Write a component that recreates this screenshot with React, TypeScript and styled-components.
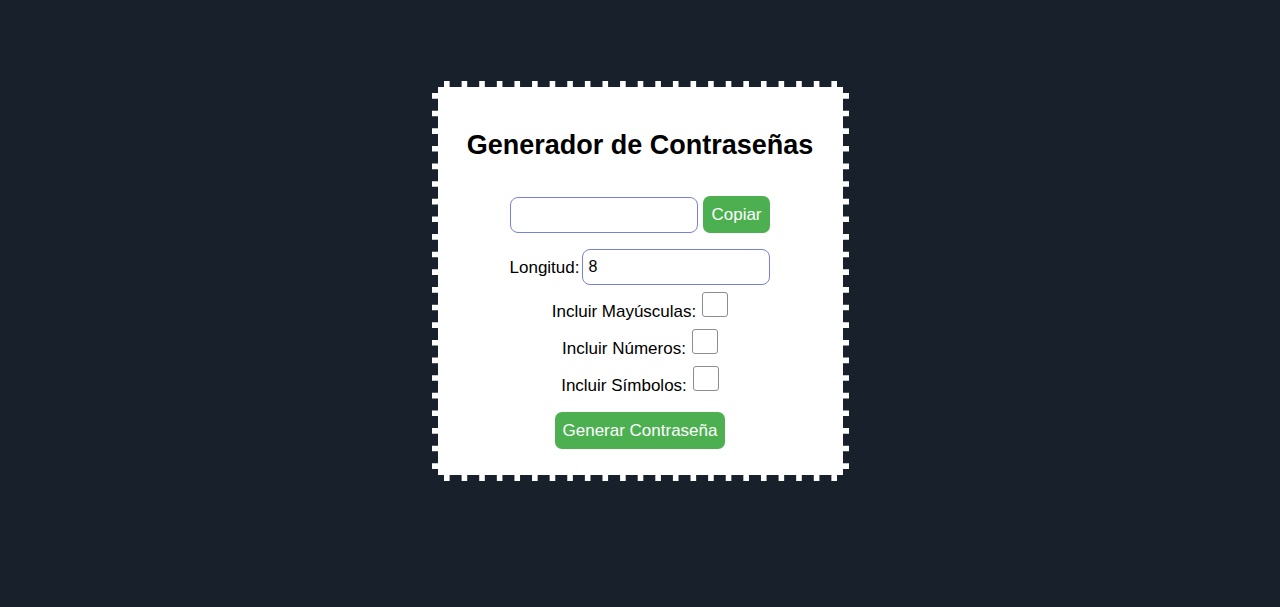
import React from "react";
import styled, { createGlobalStyle } from "styled-components";

const Global = createGlobalStyle`
  html, body { margin: 0; padding: 0; background: #17202b; }
  body { font-family: "Liberation Sans", Arial, sans-serif; }
  * { box-sizing: border-box; }
`;

const Page = styled.div`
  min-height: 607px;
  display: flex;
  justify-content: center;
  align-items: flex-start;
  padding-top: 81px;
`;

const Card = styled.div`
  width: 417px;
  height: 400px;
  background: #fff;
  border: 6px dashed #17202b;
  border-radius: 4px;
  padding-top: 43px;
  display: flex;
  flex-direction: column;
  align-items: center;
`;

const Title = styled.h1`
  margin: 0;
  font-size: 27px;
  font-weight: 700;
  color: #000;
  line-height: 31px;
`;

const Row = styled.div<{ $mt: number }>`
  display: flex;
  align-items: center;
  justify-content: center;
  margin-top: ${(p) => p.$mt}px;
  font-size: 17px;
  color: #000;
`;

const CheckRow = styled(Row)`
  align-items: flex-end;
  gap: 6px;
`;

const Label = styled.label`
  font-size: 17px;
  line-height: 19px;
`;

const TextInput = styled.input<{ $ml?: number }>`
  width: 188px;
  height: 36px;
  margin-left: ${(p) => p.$ml ?? 0}px;
  border: 1px solid #7781d9;
  border-radius: 8px;
  padding: 0 5px;
  font-family: "Liberation Sans", Arial, sans-serif;
  font-size: 16px;
  color: #000;
  outline: none;
  background: #fff;
`;

const Button = styled.button<{ $ml?: number }>`
  height: 37px;
  margin-left: ${(p) => p.$ml ?? 0}px;
  padding: 0 8px;
  border: none;
  border-radius: 7px;
  background: #4caf50;
  color: #fff;
  font-family: "Liberation Sans", Arial, sans-serif;
  font-size: 17px;
  cursor: pointer;
`;

const Check = styled.input.attrs({ type: "checkbox" })`
  appearance: none;
  -webkit-appearance: none;
  width: 26px;
  height: 25px;
  margin: 0 0 4px 0;
  border: 1px solid #8d8d8d;
  border-radius: 3px;
  background: #fff;
`;

export default function App() {
  return (
    <>
      <Global />
      <Page>
        <Card>
          <Title>Generador de Contraseñas</Title>
          <Row $mt={35}>
            <TextInput type="text" readOnly value="" />
            <Button $ml={5}>Copiar</Button>
          </Row>
          <Row $mt={16}>
            <Label>Longitud:</Label>
            <TextInput type="number" defaultValue={8} $ml={3} />
          </Row>
          <CheckRow $mt={7}>
            <Label>Incluir Mayúsculas:</Label>
            <Check />
          </CheckRow>
          <CheckRow $mt={8}>
            <Label>Incluir Números:</Label>
            <Check />
          </CheckRow>
          <CheckRow $mt={8}>
            <Label>Incluir Símbolos:</Label>
            <Check />
          </CheckRow>
          <Row $mt={17}>
            <Button>Generar Contraseña</Button>
          </Row>
        </Card>
      </Page>
    </>
  );
}
